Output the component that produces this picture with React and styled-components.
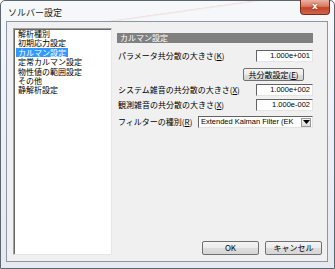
import React from "react";
import styled, { createGlobalStyle } from "styled-components";

const GlobalStyle = createGlobalStyle`
  html, body {
    margin: 0;
    padding: 0;
    background: #ffffff;
  }
  body {
    font-family: "Liberation Sans", "Noto Sans CJK JP", sans-serif;
  }
`;

const items = [
  "解析種別",
  "初期応力設定",
  "カルマン設定",
  "定常カルマン設定",
  "物性値の範囲設定",
  "その他",
  "静解析設定",
];

const App = () => {
  return (
    <>
      <GlobalStyle />
      <Window>
        <TitleBar>
          <Title>ソルバー設定</Title>
          <CloseButton>x</CloseButton>
        </TitleBar>
        <Client>
          <List>
            {items.map((item) => (
              <ListRow key={item}>
                <ListItem selected={item === "カルマン設定"}>{item}</ListItem>
              </ListRow>
            ))}
          </List>
          <Main>
            <Header>カルマン設定</Header>
            <FieldRow top={7}>
              <Label>
                パラメータ共分散の大きさ(<u>K</u>)
              </Label>
              <NumberBox>1.000e+001</NumberBox>
            </FieldRow>
            <ButtonRow>
              <SmallButton>
                共分散設定(<u>E</u>)
              </SmallButton>
            </ButtonRow>
            <FieldRow top={3}>
              <Label>
                システム雑音の共分散の大きさ(<u>X</u>)
              </Label>
              <NumberBox>1.000e+002</NumberBox>
            </FieldRow>
            <FieldRow top={3}>
              <Label>
                観測雑音の共分散の大きさ(<u>X</u>)
              </Label>
              <NumberBox>1.000e-002</NumberBox>
            </FieldRow>
            <FilterRow>
              <Label>
                フィルターの種別(<u>R</u>)
              </Label>
              <Select>
                <SelectText>Extended Kalman Filter (EK</SelectText>
                <DropButton>
                  <svg width="7" height="4" viewBox="0 0 7 4">
                    <path d="M0 0h7L3.5 4z" fill="#000" />
                  </svg>
                </DropButton>
              </Select>
            </FilterRow>
            <Footer>
              <DialogButton>OK</DialogButton>
              <DialogButton>キャンセル</DialogButton>
            </Footer>
          </Main>
        </Client>
      </Window>
    </>
  );
};

export default App;

const Window = styled.div`
  position: relative;
  width: 335px;
  height: 269px;
  box-sizing: border-box;
  border: 1px solid #5d6670;
  border-radius: 5px 5px 0 0;
  background: linear-gradient(
    to bottom,
    #f7f8fa 0%,
    #eef1f5 40%,
    #e6eaef 100%
  );
  padding: 0 6px 6px 5px;
  display: flex;
  flex-direction: column;
`;

const TitleBar = styled.div`
  height: 20px;
  display: flex;
  align-items: center;
  background: linear-gradient(
    172deg,
    transparent 0%,
    transparent 52%,
    rgba(210, 120, 120, 0.18) 53%,
    transparent 56%
  );
`;

const Title = styled.span`
  font-family: "Noto Sans CJK JP", sans-serif;
  font-size: 9px;
  color: #1a1a1a;
  margin-left: 2px;
  margin-top: 2px;
`;

const CloseButton = styled.div`
  position: absolute;
  top: -1px;
  right: 4px;
  width: 30px;
  height: 15px;
  box-sizing: border-box;
  border: 1px solid #7c2c1e;
  border-top: none;
  border-radius: 0 0 4px 4px;
  background: linear-gradient(to bottom, #eab3a4 0%, #d97a62 45%, #c2432b 55%, #d0654a 100%);
  color: #ffffff;
  font-family: "DejaVu Sans", sans-serif;
  font-weight: bold;
  font-size: 9px;
  line-height: 12px;
  text-align: center;
  text-shadow: 0 0 2px #5a1a10;
`;

const Client = styled.div`
  flex: 1;
  display: flex;
  border: 1px solid #8b97a6;
  background: #f0f0f0;
  padding: 6px 5px 6px 6px;
`;

const List = styled.div`
  width: 99px;
  box-sizing: border-box;
  background: #ffffff;
  border-style: solid;
  border-width: 1px;
  border-color: #a0a0a0 #e6e6e6 #e6e6e6 #a0a0a0;
  box-shadow: inset 1px 1px 0 #696969;
  padding: 0 0 0 2px;
`;

const ListRow = styled.div`
  height: 9.4px;
  line-height: 9.4px;
  overflow: visible;
`;

const ListItem = styled.span`
  display: inline-block;
  vertical-align: top;
  height: 9.4px;
  line-height: 9.4px;
  font-family: "Noto Sans CJK JP", sans-serif;
  font-size: 8px;
  padding: 0 2px;
  color: ${(props) => (props.selected ? "#ffffff" : "#000000")};
  background: ${(props) => (props.selected ? "#3399ff" : "transparent")};
`;

const Main = styled.div`
  flex: 1;
  margin-left: 5px;
  display: flex;
  flex-direction: column;
`;

const Header = styled.div`
  height: 10px;
  margin: 5px 9px 0 0;
  background: #808080;
  color: #ffffff;
  font-family: "Noto Sans CJK JP", sans-serif;
  font-size: 8px;
  line-height: 10px;
  padding-left: 3px;
`;

const FieldRow = styled.div`
  display: flex;
  align-items: center;
  justify-content: space-between;
  margin: ${(props) => props.top}px 9px 0 1px;
  height: 12px;
`;

const Label = styled.span`
  font-family: "Noto Sans CJK JP", sans-serif;
  font-size: 8px;
  line-height: 10px;
  color: #000000;
  white-space: nowrap;
  u {
    text-decoration: underline;
    text-underline-offset: 1px;
  }
`;

const NumberBox = styled.div`
  width: 57px;
  height: 12px;
  box-sizing: border-box;
  background: #ffffff;
  border-style: solid;
  border-width: 1px;
  border-color: #646464 #e3e3e3 #e3e3e3 #646464;
  font-family: "Liberation Sans", sans-serif;
  font-size: 7.5px;
  line-height: 10px;
  text-align: right;
  padding-right: 2px;
`;

const ButtonRow = styled.div`
  display: flex;
  justify-content: flex-end;
  margin: 6px 18px 0 0;
`;

const SmallButton = styled.div`
  width: 61px;
  height: 13px;
  box-sizing: border-box;
  border: 1px solid #707070;
  border-radius: 2px;
  background: linear-gradient(to bottom, #f4f4f4 0%, #ebebeb 50%, #dddddd 51%, #d6d6d6 100%);
  font-family: "Noto Sans CJK JP", sans-serif;
  font-size: 8px;
  line-height: 11px;
  text-align: center;
  u {
    text-underline-offset: 1px;
  }
`;

const FilterRow = styled.div`
  display: flex;
  align-items: center;
  justify-content: space-between;
  margin: 5px 9px 0 1px;
  height: 12px;
`;

const Select = styled.div`
  width: 115px;
  height: 12px;
  box-sizing: border-box;
  display: flex;
  align-items: center;
  background: #ffffff;
  border-style: solid;
  border-width: 1px;
  border-color: #646464 #e3e3e3 #e3e3e3 #646464;
`;

const SelectText = styled.span`
  flex: 1;
  overflow: hidden;
  white-space: nowrap;
  font-family: "Liberation Sans", sans-serif;
  font-size: 7.5px;
  line-height: 10px;
  padding-left: 2px;
`;

const DropButton = styled.div`
  width: 10px;
  height: 9px;
  margin-right: 1px;
  box-sizing: border-box;
  border: 1px solid #9a9a9a;
  background: linear-gradient(to bottom, #f4f4f4, #dcdcdc);
  display: flex;
  align-items: center;
  justify-content: center;
`;

const Footer = styled.div`
  margin-top: auto;
  display: flex;
  justify-content: flex-end;
  gap: 6px;
`;

const DialogButton = styled.div`
  width: 57px;
  height: 14px;
  box-sizing: border-box;
  border: 1px solid #707070;
  border-radius: 2px;
  background: linear-gradient(to bottom, #f4f4f4 0%, #ebebeb 50%, #dddddd 51%, #d6d6d6 100%);
  font-family: "Noto Sans CJK JP", sans-serif;
  font-size: 8px;
  line-height: 12px;
  text-align: center;
`;
